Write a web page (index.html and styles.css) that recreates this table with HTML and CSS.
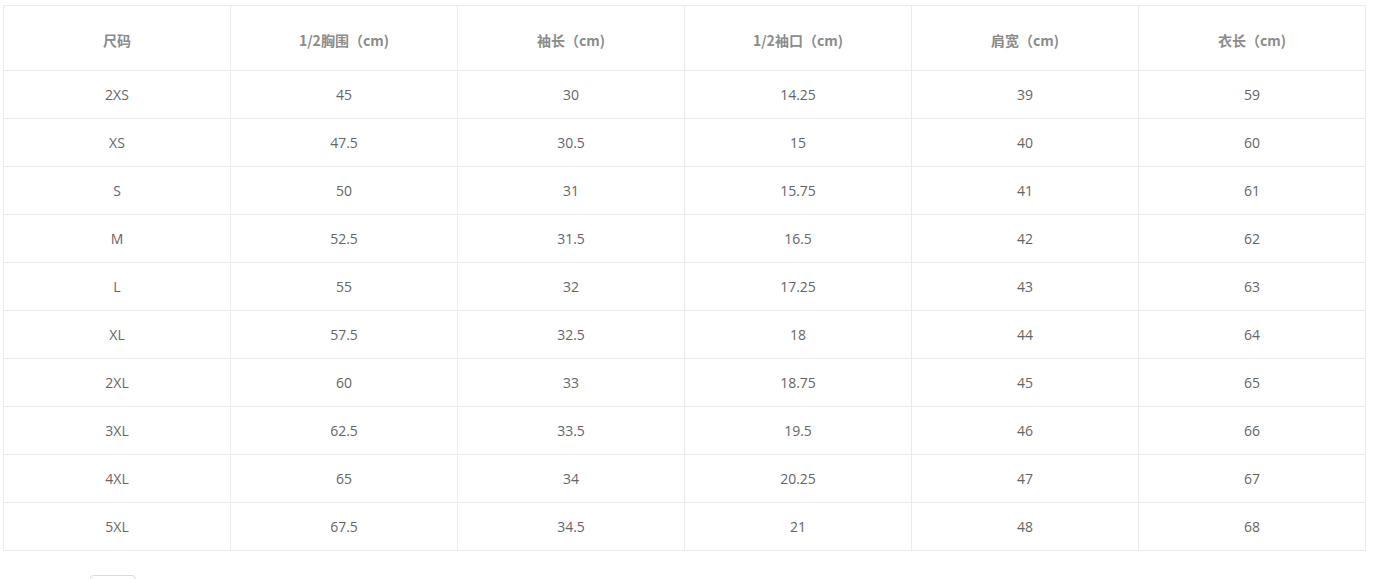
FILE: index.html
```html
<!DOCTYPE html>
<html lang="zh">
<head>
<meta charset="utf-8">
<title>尺码表</title>
<link rel="stylesheet" href="styles.css">
</head>
<body>
<div class="page">
  <table class="size-table">
    <thead>
      <tr><th>尺码</th><th>1/2胸围（cm)</th><th>袖长（cm)</th><th>1/2袖口（cm)</th><th>肩宽（cm)</th><th>衣长（cm)</th></tr>
    </thead>
    <tbody>
      <tr><td>2XS</td><td>45</td><td>30</td><td>14.25</td><td>39</td><td>59</td></tr>
      <tr><td>XS</td><td>47.5</td><td>30.5</td><td>15</td><td>40</td><td>60</td></tr>
      <tr><td>S</td><td>50</td><td>31</td><td>15.75</td><td>41</td><td>61</td></tr>
      <tr><td>M</td><td>52.5</td><td>31.5</td><td>16.5</td><td>42</td><td>62</td></tr>
      <tr><td>L</td><td>55</td><td>32</td><td>17.25</td><td>43</td><td>63</td></tr>
      <tr><td>XL</td><td>57.5</td><td>32.5</td><td>18</td><td>44</td><td>64</td></tr>
      <tr><td>2XL</td><td>60</td><td>33</td><td>18.75</td><td>45</td><td>65</td></tr>
      <tr><td>3XL</td><td>62.5</td><td>33.5</td><td>19.5</td><td>46</td><td>66</td></tr>
      <tr><td>4XL</td><td>65</td><td>34</td><td>20.25</td><td>47</td><td>67</td></tr>
      <tr><td>5XL</td><td>67.5</td><td>34.5</td><td>21</td><td>48</td><td>68</td></tr>
    </tbody>
  </table>
  <div class="footer">
    <div class="footer-box"></div>
  </div>
</div>
</body>
</html>
```

FILE: styles.css
```css
html, body {
  margin: 0;
  padding: 0;
  background: #fff;
}
body {
  font-family: "Open Sans", "Noto Sans", "Noto Sans CJK SC", sans-serif;
  color: #666;
}
.page {
  padding: 5px 0 0 3px;
}
.size-table {
  border-collapse: collapse;
  width: 1363px;
  table-layout: fixed;
}
.size-table th,
.size-table td {
  border: 1px solid #ebebeb;
  text-align: center;
  padding: 0;
}
.size-table th {
  height: 60px;
  padding-top: 4px;
  font-size: 14px;
  font-weight: bold;
  color: #8c8c8c;
  font-family: "Noto Sans CJK SC", "Open Sans", sans-serif;
}
.size-table td {
  height: 47px;
  font-size: 14px;
  color: #666;
}
.footer {
  padding: 24px 0 0 87px;
}
.footer-box {
  width: 44px;
  height: 28px;
  border: 1px solid #dcdcdc;
  border-radius: 4px;
}
```
